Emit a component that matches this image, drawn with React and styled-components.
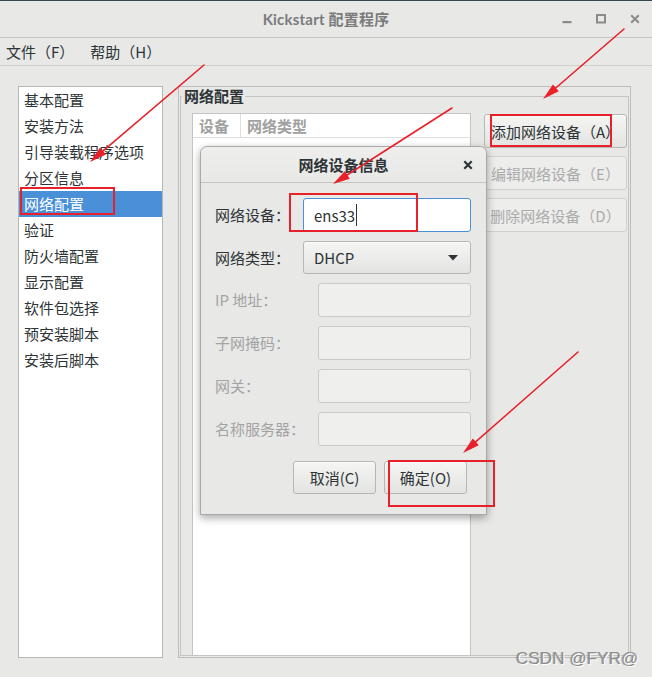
import React from "react";
import styled, { createGlobalStyle, css } from "styled-components";

const GlobalStyle = createGlobalStyle`
  html, body { margin: 0; padding: 0; background: #e8e8e7; }
  body { font-family: "Noto Sans CJK SC", "Noto Sans", sans-serif; }
  * { box-sizing: border-box; }
`;

const FONT = `"Noto Sans CJK SC", "Noto Sans", sans-serif`;
const RED = "#e8202a";

const Window = styled.div`
  position: relative;
  width: 652px;
  height: 677px;
  background: #e8e8e7;
  overflow: hidden;
  display: flex;
  flex-direction: column;
  font-family: ${FONT};
  color: #2e3436;
`;

const TitleBar = styled.div`
  height: 38px;
  flex: none;
  border-top: 1px solid #34474a;
  border-bottom: 1px solid #c6c6c4;
  display: grid;
  grid-template-columns: 1fr auto 1fr;
  align-items: center;
`;

const TitleText = styled.div`
  grid-column: 2;
  font-family: "Lato", ${FONT};
  font-weight: 700;
  font-size: 15px;
  color: #7b7b7b;
  letter-spacing: 0.2px;
  padding-bottom: 1px;
`;

const WindowControls = styled.div`
  grid-column: 3;
  justify-self: end;
  display: flex;
  height: 100%;
`;

const ControlButton = styled.div`
  width: 34px;
  height: 100%;
  display: flex;
  align-items: center;
  justify-content: center;
  color: #8b8b8b;
`;

const MenuBar = styled.div`
  height: 28px;
  flex: none;
  border-bottom: 1px solid #cfcfcd;
  display: flex;
  align-items: center;
`;

const MenuItem = styled.div`
  padding: 0 10px 0 6px;
  font-size: 15px;
  color: #2e3436;
`;

const Content = styled.div`
  flex: 1;
  display: flex;
  gap: 15px;
  padding: 20px 21px 19px 18px;
  min-height: 0;
`;

const CategoryList = styled.div`
  width: 145px;
  flex: none;
  background: #ffffff;
  border: 1px solid #b6b6b3;
`;

const CategoryItem = styled.div`
  height: 26px;
  display: flex;
  align-items: center;
  padding: 0 0 2px 5px;
  font-size: 15px;
  color: #2e3436;
  ${(p) =>
    p.$selected &&
    css`
      background: #4a90d9;
      color: #ffffff;
    `}
`;

const RightPane = styled.div`
  flex: 1;
  display: flex;
  flex-direction: column;
  border: 1px solid #bdbdbb;
  padding: 0 1px 1px 1px;
`;

const Frame = styled.fieldset`
  flex: 1;
  margin: 0;
  padding: 0;
  min-width: 0;
  border: 1px solid #c4c4c2;
  display: flex;
  flex-direction: column;
`;

const FrameLabel = styled.legend`
  margin-left: 1px;
  padding: 0 1px 0 2px;
  font-size: 15px;
  font-weight: 700;
  line-height: 18px;
  color: #2e3436;
`;

const FrameBody = styled.div`
  flex: 1;
  display: flex;
  gap: 13px;
  padding: 8px 1px 0 11px;
  min-height: 0;
`;

const DeviceTable = styled.div`
  width: 279px;
  flex: none;
  background: #ffffff;
  border: 1px solid #c4c4c2;
  border-bottom: none;
  display: flex;
  flex-direction: column;
`;

const TableHeader = styled.div`
  height: 24px;
  display: flex;
  border-bottom: 1px solid #dededc;
`;

const HeaderCell = styled.div`
  width: ${(p) => (p.$width ? `${p.$width}px` : "auto")};
  flex: ${(p) => (p.$width ? "none" : "1")};
  display: flex;
  align-items: center;
  padding-left: 6px;
  font-size: 15px;
  font-weight: 700;
  color: #a0a0a0;
  ${(p) => p.$divider && css`border-right: 1px solid #dededc;`}
`;

const ButtonColumn = styled.div`
  width: 143px;
  flex: none;
  display: flex;
  flex-direction: column;
  gap: 8px;
  padding-top: 1px;
`;

const buttonLook = css`
  border: 1px solid #b6b6b3;
  border-radius: 3px;
  background: linear-gradient(to bottom, #f5f5f4, #e3e3e2);
  font-family: ${FONT};
  font-size: 15px;
  color: #2e3436;
  box-shadow: inset 0 1px 0 rgba(255, 255, 255, 0.8);
  padding: 0;
  white-space: nowrap;
`;

const SideButton = styled.button`
  ${buttonLook}
  height: 34px;
  width: 100%;
  overflow: hidden;
  &:disabled {
    background: #ededec;
    border-color: #d0d0ce;
    color: #ababab;
    box-shadow: none;
  }
`;

const Dialog = styled.div`
  position: absolute;
  left: 200px;
  top: 146px;
  width: 287px;
  background: #e8e8e7;
  border: 1px solid #a9a9a7;
  border-radius: 7px 7px 0 0;
  box-shadow: 0 3px 9px rgba(0, 0, 0, 0.35);
  padding-bottom: 20px;
`;

const DialogHeader = styled.div`
  height: 36px;
  border-bottom: 1px solid #c4c4c2;
  border-radius: 7px 7px 0 0;
  background: linear-gradient(to bottom, #eeeeed, #e8e8e7);
  display: grid;
  grid-template-columns: 1fr auto 1fr;
  align-items: center;
`;

const DialogTitle = styled.div`
  grid-column: 2;
  font-size: 15px;
  font-weight: 700;
  color: #2e3436;
  padding-bottom: 1px;
`;

const DialogClose = styled.div`
  grid-column: 3;
  justify-self: end;
  width: 36px;
  display: flex;
  justify-content: center;
  align-items: center;
  color: #2e3436;
`;

const DialogBody = styled.div`
  padding: 15px 15px 0 14px;
`;

const FieldGrid = styled.div`
  display: grid;
  grid-template-columns: ${(p) => p.$labelWidth}px 1fr;
  row-gap: 9px;
  align-items: center;
  & + & {
    margin-top: 9px;
  }
`;

const FieldLabel = styled.div`
  font-size: 15px;
  white-space: nowrap;
  padding-bottom: 1px;
  color: ${(p) => (p.$disabled ? "#a3a3a3" : "#2e3436")};
`;

const Entry = styled.div`
  height: 34px;
  border-radius: 3px;
  border: 1px solid ${(p) => (p.$focused ? "#4a90d9" : p.$disabled ? "#cacac8" : "#b6b6b3")};
  background: ${(p) => (p.$disabled ? "#efefee" : "#ffffff")};
  display: flex;
  align-items: center;
  padding-left: 10px;
  font-size: 15px;
  color: #2e3436;
`;

const Caret = styled.span`
  display: inline-block;
  width: 1px;
  height: 22px;
  background: #2e3436;
  margin-left: 1px;
`;

const Combo = styled.div`
  ${buttonLook}
  height: 33px;
  display: flex;
  align-items: center;
  justify-content: space-between;
  padding: 0 12px 0 10px;
`;

const DialogButtons = styled.div`
  display: flex;
  justify-content: flex-end;
  gap: 8px;
  margin-top: 15px;
  padding-right: 4px;
`;

const DialogButton = styled.button`
  ${buttonLook}
  width: 83px;
  height: 33px;
`;

const Overlay = styled.svg`
  position: absolute;
  left: 0;
  top: 0;
  pointer-events: none;
`;

const Watermark = styled.div`
  position: absolute;
  left: 516px;
  top: 649px;
  font-family: "Liberation Sans", Arial, sans-serif;
  font-size: 17px;
  color: #8e8e8e;
  text-shadow: 1px 1px 0 #ffffff, -1px 0 0 rgba(90, 90, 90, 0.35);
  letter-spacing: 0.1px;
`;

const categories = [
  "基本配置",
  "安装方法",
  "引导装载程序选项",
  "分区信息",
  "网络配置",
  "验证",
  "防火墙配置",
  "显示配置",
  "软件包选择",
  "预安装脚本",
  "安装后脚本",
];

function Arrow({ from, to }) {
  const [sx, sy] = from;
  const [tx, ty] = to;
  const dx = tx - sx;
  const dy = ty - sy;
  const len = Math.hypot(dx, dy);
  const ux = dx / len;
  const uy = dy / len;
  const nx = -uy;
  const ny = ux;
  const L = 17;
  const W = 4.5;
  const bx = tx - ux * L;
  const by = ty - uy * L;
  const pts = `${tx},${ty} ${bx + nx * W},${by + ny * W} ${bx - nx * W},${by - ny * W}`;
  return (
    <g>
      <line x1={sx} y1={sy} x2={bx + ux * 4} y2={by + uy * 4} stroke={RED} strokeWidth="1.6" strokeLinecap="round" />
      <polygon points={pts} fill={RED} />
    </g>
  );
}

function MarkBox({ x, y, w, h }) {
  return <rect x={x} y={y} width={w} height={h} fill="none" stroke={RED} strokeWidth="2" />;
}

export default function App() {
  return (
    <>
      <GlobalStyle />
      <Window>
        <TitleBar>
          <TitleText>Kickstart 配置程序</TitleText>
          <WindowControls>
            <ControlButton>
              <svg width="10" height="10" viewBox="0 0 10 10">
                <rect x="0.5" y="7" width="9" height="2.2" fill="currentColor" />
              </svg>
            </ControlButton>
            <ControlButton>
              <svg width="10" height="10" viewBox="0 0 10 10">
                <rect x="1" y="1" width="8" height="7.5" fill="none" stroke="currentColor" strokeWidth="2" />
              </svg>
            </ControlButton>
            <ControlButton>
              <svg width="10" height="10" viewBox="0 0 10 10">
                <path d="M1.2 1.2 L8.8 8.8 M8.8 1.2 L1.2 8.8" stroke="currentColor" strokeWidth="2" />
              </svg>
            </ControlButton>
          </WindowControls>
        </TitleBar>

        <MenuBar>
          <MenuItem>文件（F）</MenuItem>
          <MenuItem>帮助（H）</MenuItem>
        </MenuBar>

        <Content>
          <CategoryList>
            {categories.map((c) => (
              <CategoryItem key={c} $selected={c === "网络配置"}>
                {c}
              </CategoryItem>
            ))}
          </CategoryList>

          <RightPane>
            <Frame>
              <FrameLabel>网络配置</FrameLabel>
              <FrameBody>
                <DeviceTable>
                  <TableHeader>
                    <HeaderCell $width={48} $divider>
                      设备
                    </HeaderCell>
                    <HeaderCell>网络类型</HeaderCell>
                  </TableHeader>
                </DeviceTable>
                <ButtonColumn>
                  <SideButton>添加网络设备（A）</SideButton>
                  <SideButton disabled>编辑网络设备（E）</SideButton>
                  <SideButton disabled>删除网络设备（D）</SideButton>
                </ButtonColumn>
              </FrameBody>
            </Frame>
          </RightPane>
        </Content>

        <Dialog>
          <DialogHeader>
            <DialogTitle>网络设备信息</DialogTitle>
            <DialogClose>
              <svg width="10" height="10" viewBox="0 0 10 10">
                <path d="M1.3 1.3 L8.7 8.7 M8.7 1.3 L1.3 8.7" stroke="currentColor" strokeWidth="2.2" />
              </svg>
            </DialogClose>
          </DialogHeader>
          <DialogBody>
            <FieldGrid $labelWidth={88}>
              <FieldLabel>网络设备：</FieldLabel>
              <Entry $focused>
                ens33
                <Caret />
              </Entry>
              <FieldLabel>网络类型：</FieldLabel>
              <Combo>
                <span>DHCP</span>
                <svg width="10" height="6" viewBox="0 0 10 6">
                  <path d="M0 0 L10 0 L5 5.5 Z" fill="#2e3436" />
                </svg>
              </Combo>
            </FieldGrid>
            <FieldGrid $labelWidth={103}>
              <FieldLabel $disabled>IP 地址：</FieldLabel>
              <Entry $disabled />
              <FieldLabel $disabled>子网掩码：</FieldLabel>
              <Entry $disabled />
              <FieldLabel $disabled>网关：</FieldLabel>
              <Entry $disabled />
              <FieldLabel $disabled>名称服务器：</FieldLabel>
              <Entry $disabled />
            </FieldGrid>
            <DialogButtons>
              <DialogButton>取消(C)</DialogButton>
              <DialogButton>确定(O)</DialogButton>
            </DialogButtons>
          </DialogBody>
        </Dialog>

        <Overlay width="652" height="677" viewBox="0 0 652 677">
          <MarkBox x={21} y={188} w={93} h={26} />
          <MarkBox x={491} y={115} w={120} h={31} />
          <MarkBox x={290} y={194} w={127} h={37} />
          <MarkBox x={389} y={461} w={105} h={45} />
          <Arrow from={[204, 65]} to={[90, 162]} />
          <Arrow from={[452, 108]} to={[333, 184]} />
          <Arrow from={[624, 29]} to={[543, 99]} />
          <Arrow from={[578, 352]} to={[463, 453]} />
        </Overlay>

        <Watermark>CSDN @FYR@</Watermark>
      </Window>
    </>
  );
}
